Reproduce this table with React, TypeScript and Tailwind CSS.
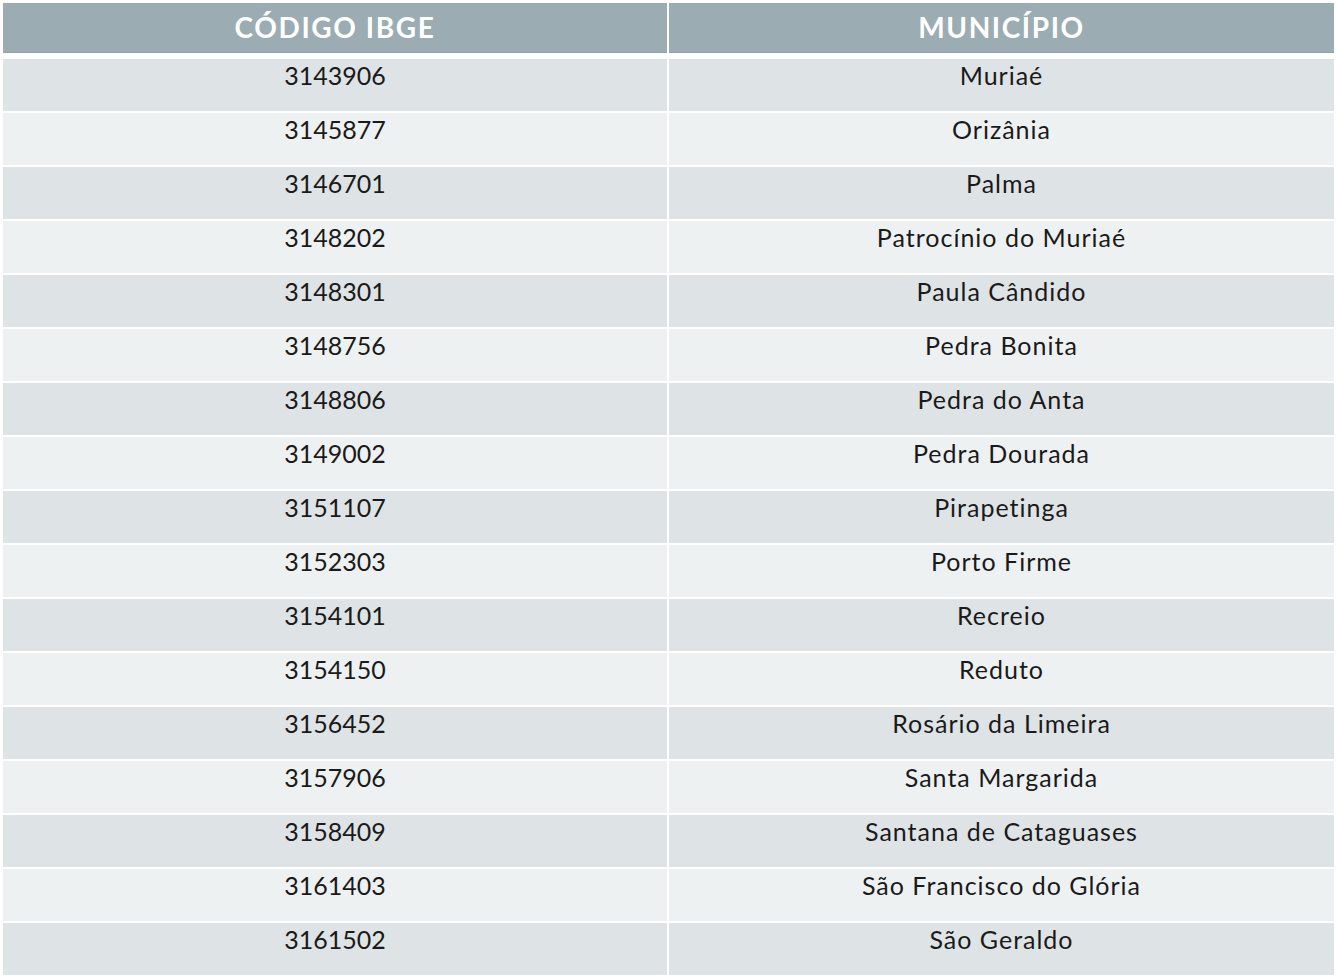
import React from "react";

const rows: [string, string][] = [
  ["3143906", "Muriaé"],
  ["3145877", "Orizânia"],
  ["3146701", "Palma"],
  ["3148202", "Patrocínio do Muriaé"],
  ["3148301", "Paula Cândido"],
  ["3148756", "Pedra Bonita"],
  ["3148806", "Pedra do Anta"],
  ["3149002", "Pedra Dourada"],
  ["3151107", "Pirapetinga"],
  ["3152303", "Porto Firme"],
  ["3154101", "Recreio"],
  ["3154150", "Reduto"],
  ["3156452", "Rosário da Limeira"],
  ["3157906", "Santa Margarida"],
  ["3158409", "Santana de Cataguases"],
  ["3161403", "São Francisco do Glória"],
  ["3161502", "São Geraldo"],
];

const App = () => {
  return (
    <div className="w-[1340px] h-[980px] bg-white pt-[3px] pl-[3px] font-['Lato',sans-serif] text-[#1a1a1a]">
      <div className="w-[1331px]">
        {/* Header */}
        <div className="grid grid-cols-[664px_665px] gap-x-[2px]">
          <div className="h-[50px] bg-[#9badb2] border-b border-[#91a3a8] text-white font-bold text-[28px] tracking-[1.6px] leading-[48px] text-center">
            CÓDIGO IBGE
          </div>
          <div className="h-[50px] bg-[#9badb2] border-b border-[#91a3a8] text-white font-bold text-[28px] tracking-[1.6px] leading-[48px] text-center">
            MUNICÍPIO
          </div>
        </div>
        {/* Body */}
        <div className="mt-[6px] flex flex-col gap-y-[2px]">
          {rows.map(([code, name], i) => (
            <div key={code} className="grid grid-cols-[664px_665px] gap-x-[2px]">
              <div
                className={`h-[52px] text-[25px] leading-[32px] text-center ${
                  i % 2 === 0 ? "bg-[#dee3e5]" : "bg-[#edf1f2]"
                }`}
              >
                {code}
              </div>
              <div
                className={`h-[52px] text-[25px] tracking-[1px] leading-[32px] text-center ${
                  i % 2 === 0 ? "bg-[#dee3e5]" : "bg-[#edf1f2]"
                }`}
              >
                {name}
              </div>
            </div>
          ))}
        </div>
      </div>
    </div>
  );
};

export default App;
